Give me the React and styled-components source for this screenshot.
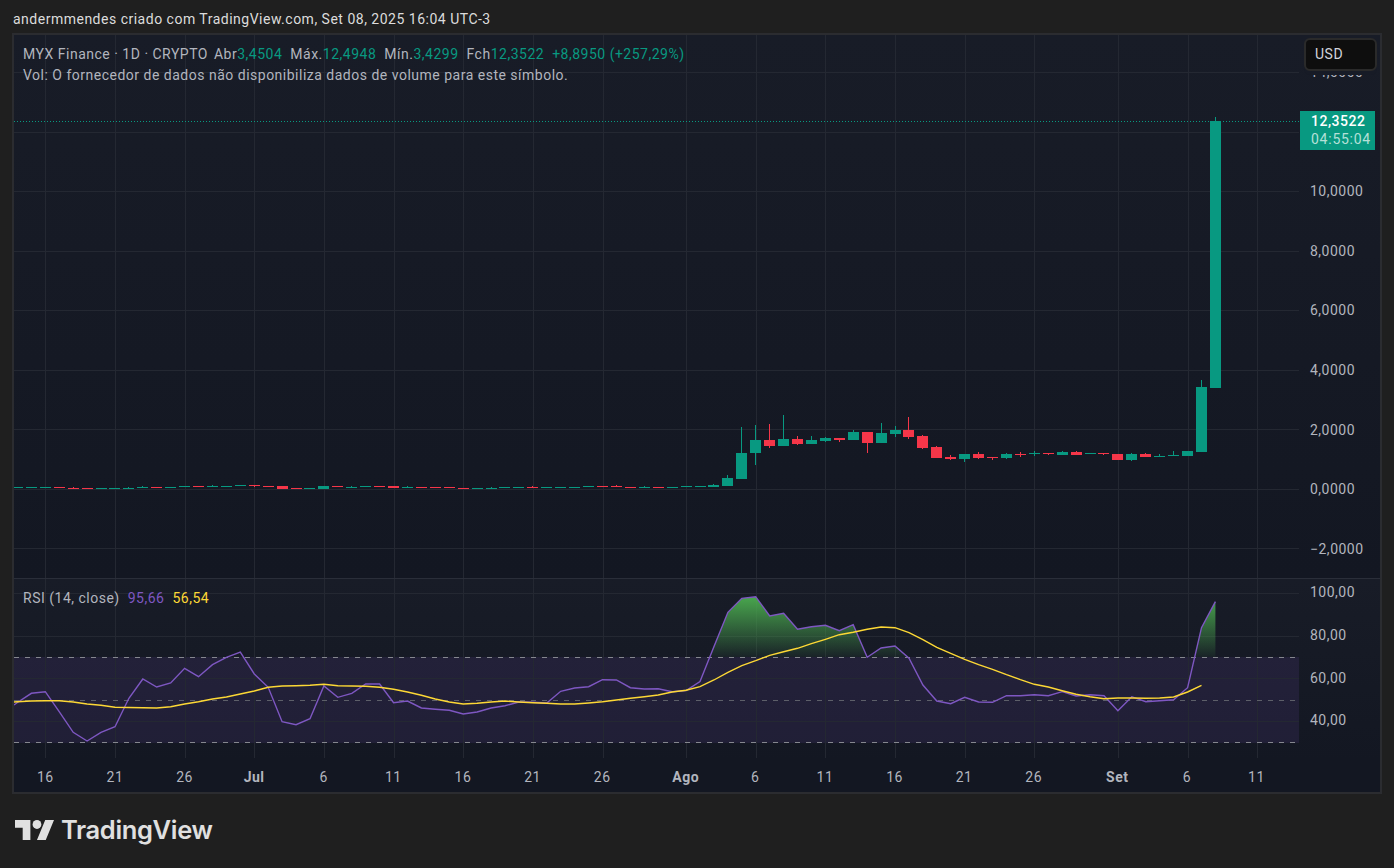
import React from 'react';
import styled, { createGlobalStyle } from 'styled-components';

const GlobalStyle = createGlobalStyle`
  html, body {
    margin: 0;
    height: 100%;
    overflow: hidden;
    background: #1f1f1f;
  }
`;

const UI_FONT = `Roboto, "Liberation Sans", sans-serif`;

const Page = styled.div`
  width: 1394px;
  height: 868px;
  font-family: ${UI_FONT};
  letter-spacing: 0.5px;
  background: #1f1f1f;
`;

const Caption = styled.div`
  height: 33px;
  padding: 5px 0 0 13px;
  box-sizing: border-box;
  font-size: 14px;
  line-height: 28px;
  color: #dcdcdc;
`;

const Frame = styled.div`
  position: relative;
  width: 1370px;
  height: 761px;
  margin-left: 12px;
  box-sizing: border-box;
  border: 2px solid #2b2c30;
  display: flex;
  flex-direction: column;
  background: #131722;
`;

const Pane = styled.div`
  display: flex;
  height: ${p => p.$height}px;
  background: linear-gradient(#181c27, #131722);
  border-top: ${p => (p.$divided ? '1px solid #2a2e39' : 'none')};
`;

const Canvas = styled.svg`
  display: block;
  flex: 0 0 1285px;
  height: 100%;
`;

const Axis = styled.div`
  flex: 1;
  display: flex;
  flex-direction: column;
  gap: ${p => p.$gap}px;
  padding: ${p => p.$top}px 0 0 11px;
  overflow: hidden;
`;

const AxisLabel = styled.div`
  flex: 0 0 20px;
  font-size: 14px;
  line-height: 20px;
  color: #b2b5be;
`;

const TimeAxis = styled.div`
  flex: 1;
  display: grid;
  grid-template-columns: repeat(92, 13.93px);
  padding-left: 10.4px;
  align-items: center;
`;

const TimeLabel = styled.div`
  grid-column: ${p => p.$day + 2};
  grid-row: 1;
  display: flex;
  justify-content: center;
  white-space: nowrap;
  font-size: 14px;
  color: #b2b5be;
  font-weight: ${p => (p.$major ? 700 : 400)};
`;

const Legend = styled.div`
  position: absolute;
  left: 9px;
  top: ${p => p.$top}px;
  font-size: 14px;
  line-height: 21px;
  color: #b2b5be;
  white-space: nowrap;
`;

const LegendRow = styled.div`
  display: flex;
  gap: ${p => p.$gap || 0}px;
`;

const Group = styled.span`
  display: inline-flex;
  margin-right: ${p => p.$space || 8}px;
`;

const Value = styled.span`
  color: ${p => p.$color || '#089981'};
`;

const CurrencyButton = styled.div`
  position: absolute;
  left: 1290px;
  top: 3px;
  width: 73px;
  height: 33px;
  box-sizing: border-box;
  padding-left: 9px;
  background: #0e0e0e;
  border: 2px solid #2a2a2a;
  border-radius: 6px;
  box-shadow: 0 4px 0 0 #171b26;
  font-size: 14px;
  line-height: 29px;
  color: #d1d4dc;
`;

const PriceTag = styled.div`
  position: absolute;
  left: 1286px;
  top: 76px;
  width: 75px;
  height: 39px;
  box-sizing: border-box;
  padding: 1px 0 0 11px;
  background: #089981;
  font-size: 14px;
  font-weight: 500;
  line-height: 18px;
  color: #fff;
`;

const Countdown = styled.div`
  color: #b5e0d8;
  font-weight: 400;
  letter-spacing: 0.75px;
`;

const Footer = styled.div`
  display: flex;
  align-items: center;
  gap: 7px;
  padding: 26px 0 0 15px;
  color: #e0e0e0;
  font-family: Inter, "Noto Sans", sans-serif;
  font-size: 25.5px;
  font-weight: 600;
  letter-spacing: -0.35px;
  line-height: 20px;
`;

const GREEN = '#089981';
const RED = '#f53649';
const GRID = '#242832';
const STEP = 13.93;
const dayX = i => 45.3 + STEP * i;

const gridDays = [0, 5, 10, 15, 20, 25, 30, 35, 40, 46, 51, 56, 61, 66, 71, 77, 82, 87];

const timeLabels = [
  ['16', 0], ['21', 5], ['26', 10], ['Jul', 15, true], ['6', 20], ['11', 25], ['16', 30],
  ['21', 35], ['26', 40], ['Ago', 46, true], ['6', 51], ['11', 56], ['16', 61], ['21', 66],
  ['26', 71], ['Set', 77, true], ['6', 82], ['11', 87],
];

// the 12,0000 row sits behind the last price tag, so it stays empty
const priceLabels = ['14,0000', '', '10,0000', '8,0000', '6,0000', '4,0000', '2,0000', '0,0000', '−2,0000'];
const rsiLabels = ['100,00', '80,00', '60,00', '40,00'];

// [colour, body top, body bottom, wick high, wick low] starting at day -2
const flatCandles = [
  ['g', 487], ['g', 487], ['g', 487], ['r', 487], ['r', 488, 489, 487], ['r', 488], ['g', 488], ['g', 488],
  ['g', 488, 489, 487], ['g', 487, 488, 486], ['r', 487], ['g', 487], ['g', 486], ['r', 486],
  ['g', 486, 487, 484.5], ['g', 486], ['g', 485], ['r', 485, 486, 485, 487], ['r', 486],
  ['r', 486, 489], ['r', 488], ['g', 488], ['g', 486, 489], ['r', 486], ['g', 487, 488, 486], ['g', 486],
  ['r', 486], ['r', 486, 487.7], ['g', 487, 488, 486], ['r', 487], ['r', 487], ['r', 487], ['r', 488],
  ['g', 488], ['g', 488, 489, 487], ['g', 487], ['g', 487], ['r', 487, 488, 486], ['g', 487], ['g', 487],
  ['g', 487], ['g', 486], ['r', 486], ['r', 486, 487, 485], ['r', 487], ['g', 487, 488, 486], ['r', 487],
  ['g', 487], ['g', 486, 487], ['g', 486, 487],
];

const liveCandles = [
  ['g', 485, 487, 484], ['g', 478, 486, 475], ['g', 453, 479, 427], ['g', 440, 453, 425, 465],
  ['r', 440, 446, 424, 448], ['g', 439, 446, 415], ['r', 439, 444, 436, 445], ['g', 440, 444, 436],
  ['g', 438, 441, 437, 442], ['r', 438, 440, 438, 442], ['g', 432, 440, 430], ['r', 432, 443, 432, 453],
  ['g', 433, 443, 423], ['g', 430, 434, 426, 437], ['r', 430, 437, 417, 439], ['r', 436, 448, 435, 449],
  ['r', 447, 458, 446], ['r', 457, 459, 455, 460], ['g', 454, 459, 454, 462], ['r', 454, 458, 452, 459],
  ['r', 457, 458, 457, 460], ['g', 454, 458, 453, 459], ['r', 454, 455, 452, 457], ['g', 453, 454, 451, 456],
  ['r', 453, 454, 453, 455], ['g', 452, 455, 451], ['r', 452, 455, 451], ['g', 453, 454],
  ['r', 453, 454, 453, 455], ['r', 454, 460], ['g', 454, 460, 453, 461], ['r', 454, 457, 453],
  ['g', 456, 457, 454], ['g', 455, 456, 451], ['g', 451, 456], ['g', 387, 452, 380], ['g', 121, 388, 117],
];

const candles = [...flatCandles, ...liveCandles];

// RSI and its moving average, page y for each day from -2 to 84
const rsi = [
  702.5, 693.3, 691.7, 711.7, 732.3, 741, 732.3, 726.7, 698.3, 679, 687, 683, 668.3, 676.7, 664.7, 657.3, 652,
  674, 687.3, 721.7, 724.7, 718.7, 686, 697.3, 693.3, 684, 684, 702.7, 701, 708, 709.3, 710.3, 714, 712, 708,
  705.7, 702, 702.3, 703, 691.3, 688, 686.7, 679.7, 680, 687.7, 689, 688.7, 691.7, 690.5, 681.5, 646.7, 612.3,
  598.3, 596.7, 616, 613.3, 629.3, 626.7, 625.3, 630.7, 624.7, 657.3, 648, 646, 658.3, 685, 701, 703.7, 697.3,
  702, 702.3, 695.7, 695.7, 694.7, 695.7, 691.7, 696, 694.7, 695.7, 710.7, 696.7, 701.7, 700.7, 699.7, 687.7,
  627.7, 601.7,
];

const rsiAverage = [
  701.8, 701, 700.7, 700.7, 702, 704, 705.3, 707.3, 707.5, 707.7, 708, 706.7, 704, 701.7, 699, 697, 694, 691,
  687.3, 686, 685.7, 685.3, 684.3, 685.7, 686, 686.3, 687.3, 689.3, 692, 695.3, 699, 702, 704, 703.3, 702, 701,
  702, 702.7, 703.3, 704, 704, 703, 701.7, 700, 698.3, 696.7, 695, 692, 690.3, 686.7, 680, 672.3, 665.7, 660.7,
  655.3, 651.7, 648.3, 643.7, 639.3, 634.7, 632.3, 629.3, 627, 627.7, 632.7, 639.7, 647.3, 653.3, 659.3, 664.7,
  669.3, 674.7, 679.7, 684.3, 687, 690.7, 694.3, 696.7, 698.7, 698, 698, 698.3, 698, 697, 692, 685.3,
];

const toPoints = (values, first = -2) => values.map((y, n) => `${dayX(first + n).toFixed(1)},${y}`).join(' ');

const VerticalGrid = ({ from, to }) =>
  gridDays.map(d => {
    const x = Math.round(dayX(d)) + 0.5;
    return <line key={d} x1={x} x2={x} y1={from} y2={to} stroke={GRID} />;
  });

const HorizontalGrid = ({ rows }) =>
  rows.map(y => <line key={y} x1={14} x2={1299} y1={y + 0.5} y2={y + 0.5} stroke={GRID} />);

const Candle = ({ day, data }) => {
  const [dir, top, bottom = top + 1, high = top, low = bottom] = data;
  const left = Math.round(dayX(day) - 5.5);
  const fill = dir === 'g' ? GREEN : RED;
  return (
    <g fill={fill} shapeRendering="crispEdges">
      <rect x={left + 5} y={high} width={1} height={low - high} />
      <rect x={left} y={top} width={11} height={bottom - top} />
    </g>
  );
};

const overbought = (from, to) => {
  const slice = rsi.slice(from + 2, to + 3);
  const first = dayX(from).toFixed(1);
  const last = dayX(to).toFixed(1);
  return `${first},657 ${toPoints(slice, from)} ${last},657`;
};

const Logo = () => (
  <svg width="39" height="20" viewBox="0 4 35.5 18" preserveAspectRatio="none" fill="#e0e0e0">
    <path d="M14 22H7V11H0V4h14v18zM28 22h-8l7.5-18h8L28 22z" />
    <circle cx="20" cy="8" r="4" />
  </svg>
);

const App = () => (
  <Page>
    <GlobalStyle />
    <Caption>andermmendes criado com TradingView.com, Set 08, 2025 16:04 UTC-3</Caption>
    <Frame>
      <Pane $height={543}>
        <Canvas viewBox="14 35 1285 543">
          <HorizontalGrid rows={[72, 132, 191, 251, 310, 370, 429, 489, 548]} />
          <VerticalGrid from={35} to={578} />
          {candles.map((c, n) => (
            <Candle key={n} day={n - 2} data={c} />
          ))}
          <line x1={14} x2={1299} y1={121.5} y2={121.5} stroke={GREEN} strokeDasharray="1 2" />
        </Canvas>
        <Axis $gap={39.6} $top={27}>
          {priceLabels.map((label, n) => (
            <AxisLabel key={n}>{label}</AxisLabel>
          ))}
        </Axis>
      </Pane>
      <Pane $height={182} $divided>
        <Canvas viewBox="14 579 1285 182">
          <defs>
            <linearGradient id="rsiFill" gradientUnits="userSpaceOnUse" x1="0" x2="0" y1="596" y2="657">
              <stop offset="0" stopColor="#4caf50" stopOpacity="0.95" />
              <stop offset="1" stopColor="#4caf50" stopOpacity="0.06" />
            </linearGradient>
            <clipPath id="aboveBand">
              <rect x="14" y="579" width="1285" height="78" />
            </clipPath>
          </defs>
          <rect x={14} y={657} width={1285} height={86} fill="#7e57c2" fillOpacity="0.13" />
          <HorizontalGrid rows={[593, 636, 678, 721]} />
          <VerticalGrid from={579} to={758} />
          {[657.5, 700.5, 742.5].map(y => (
            <line key={y} x1={14} x2={1299} y1={y} y2={y} stroke={y === 700.5 ? '#5d5f69' : '#85878f'} strokeDasharray="5 6" />
          ))}
          <g clipPath="url(#aboveBand)" fill="url(#rsiFill)">
            <polygon points={overbought(47, 63)} />
            <polygon points={overbought(81, 84)} />
          </g>
          <polyline points={`14,705 ${toPoints(rsi)}`} fill="none" stroke="#7e57c2" strokeWidth="1.4" />
          <polyline points={`14,702 ${toPoints(rsiAverage)}`} fill="none" stroke="#fdd835" strokeWidth="1.4" />
        </Canvas>
        <Axis $gap={22.8} $top={3}>
          {rsiLabels.map(label => (
            <AxisLabel key={label}>{label}</AxisLabel>
          ))}
        </Axis>
      </Pane>
      <TimeAxis>
        {timeLabels.map(([label, day, major]) => (
          <TimeLabel key={day} $day={day} $major={major}>
            {label}
          </TimeLabel>
        ))}
      </TimeAxis>

      <Legend $top={9}>
        <LegendRow>
          <Group $space={6}>MYX Finance · 1D · CRYPTO</Group>
          <Group>Abr<Value>3,4504</Value></Group>
          <Group>Máx.<Value>12,4948</Value></Group>
          <Group>Mín.<Value>3,4299</Value></Group>
          <Group>Fch<Value>12,3522</Value></Group>
          <Value>+8,8950 (+257,29%)</Value>
        </LegendRow>
        <LegendRow>Vol: O fornecedor de dados não disponibiliza dados de volume para este símbolo.</LegendRow>
      </Legend>
      <Legend $top={553}>
        <LegendRow $gap={8}>
          RSI (14, close)
          <Value $color="#7e57c2">95,66</Value>
          <Value $color="#fdd835">56,54</Value>
        </LegendRow>
      </Legend>
      <CurrencyButton>USD</CurrencyButton>
      <PriceTag>
        12,3522
        <Countdown>04:55:04</Countdown>
      </PriceTag>
    </Frame>
    <Footer>
      <Logo />
      TradingView
    </Footer>
  </Page>
);

export default App;
